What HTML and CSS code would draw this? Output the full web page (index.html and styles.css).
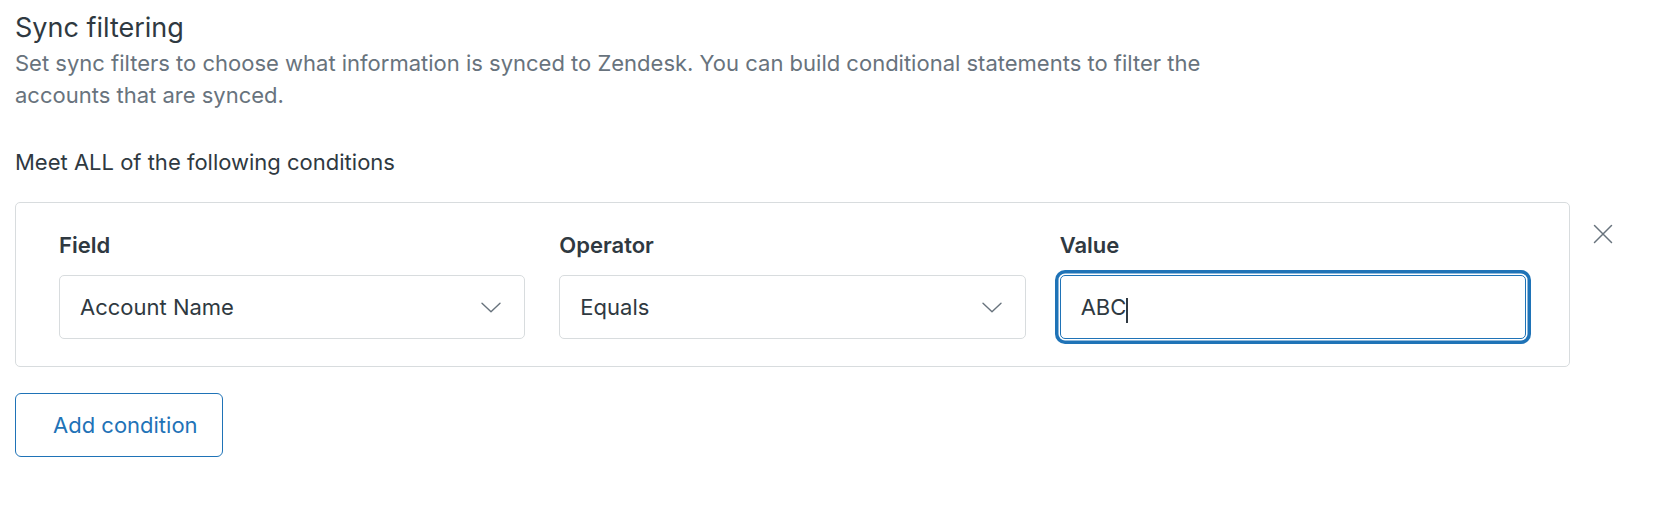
FILE: index.html
```html
<!DOCTYPE html>
<html lang="en">
<head>
<meta charset="utf-8">
<title>Sync filtering</title>
<link rel="stylesheet" href="styles.css">
</head>
<body>
<div class="page">
  <h2 class="title">Sync filtering</h2>
  <p class="desc">Set sync filters to choose what information is synced to Zendesk. You can build conditional statements to filter the<br>accounts that are synced.</p>
  <p class="rule">Meet ALL of the following conditions</p>

  <div class="condition-row">
    <div class="card">
      <div class="field">
        <label class="label">Field</label>
        <div class="select">
          <span class="select-text">Account Name</span>
          <svg class="chevron" width="20" height="11" viewBox="0 0 20 11"><polyline points="1,1.2 10,9.8 19,1.2" fill="none" stroke="#68737d" stroke-width="1.4" stroke-linecap="round" stroke-linejoin="round"/></svg>
        </div>
      </div>
      <div class="field">
        <label class="label">Operator</label>
        <div class="select">
          <span class="select-text">Equals</span>
          <svg class="chevron" width="20" height="11" viewBox="0 0 20 11"><polyline points="1,1.2 10,9.8 19,1.2" fill="none" stroke="#68737d" stroke-width="1.4" stroke-linecap="round" stroke-linejoin="round"/></svg>
        </div>
      </div>
      <div class="field">
        <label class="label">Value</label>
        <div class="input focused">
          <span class="input-text">ABC</span><span class="caret"></span>
        </div>
      </div>
    </div>
    <button class="close" aria-label="Remove condition">
      <svg width="20" height="20" viewBox="0 0 20 20"><path d="M1.5 1.5 L18.5 18.5 M18.5 1.5 L1.5 18.5" fill="none" stroke="#68737d" stroke-width="1.5" stroke-linecap="round"/></svg>
    </button>
  </div>

  <button class="add-btn">Add condition</button>
</div>
</body>
</html>
```

FILE: styles.css
```css
* { box-sizing: border-box; }

html, body {
  margin: 0;
  padding: 0;
  background: #ffffff;
}

body {
  font-family: Inter, "Noto Sans", "Liberation Sans", sans-serif;
  color: #2f3941;
}

.page {
  padding: 10px 15px 0 15px;
}

.title {
  margin: 0;
  font-size: 27px;
  line-height: 36px;
  font-weight: 400;
  color: #2f3941;
}

.desc {
  margin: 2px 0 0 0;
  font-size: 22px;
  line-height: 31.5px;
  color: #68737d;
  max-width: 1300px;
}

.rule {
  margin: 36px 0 0 0;
  font-size: 22px;
  line-height: 30px;
  color: #2f3941;
}

.condition-row {
  display: flex;
  align-items: flex-start;
  margin-top: 25px;
}

.card {
  flex: 1;
  display: grid;
  grid-template-columns: 1fr 1fr 1fr;
  column-gap: 34px;
  padding: 27px 43px 27px 43px;
  border: 1px solid #d8dcde;
  border-radius: 5px;
}

.field {
  display: flex;
  flex-direction: column;
}

.label {
  font-size: 22px;
  line-height: 30px;
  font-weight: 600;
  color: #2f3941;
  margin-bottom: 15px;
}

.select,
.input {
  height: 64px;
  display: flex;
  align-items: center;
  border: 1px solid #d8dcde;
  border-radius: 5px;
  padding: 0 23px 0 20px;
  font-size: 22px;
  line-height: 30px;
  color: #2f3941;
  background: #fff;
}

.select-text {
  flex: 1;
}

.chevron {
  display: block;
  flex: none;
}

.input.focused {
  border-color: #1f73b7;
  box-shadow: 0 0 0 1.5px #ffffff, 0 0 0 5px #1f73b7;
}

.input-text {
  color: #2f3941;
}

.caret {
  display: inline-block;
  width: 1.5px;
  height: 25px;
  background: #2f3941;
  margin-top: 7px;
}

.close {
  flex: none;
  width: 40px;
  height: 40px;
  margin: 12px 42px 0 13px;
  padding: 0;
  border: none;
  background: transparent;
  display: flex;
  align-items: center;
  justify-content: center;
  cursor: pointer;
}

.close svg { display: block; }

.add-btn {
  display: block;
  margin-top: 26px;
  width: 208px;
  height: 64px;
  padding: 0 0 0 37px;
  text-align: left;
  font-family: inherit;
  font-size: 22px;
  line-height: 30px;
  color: #1f73b7;
  background: #fff;
  border: 1px solid #1f73b7;
  border-radius: 6px;
  cursor: pointer;
}
```
